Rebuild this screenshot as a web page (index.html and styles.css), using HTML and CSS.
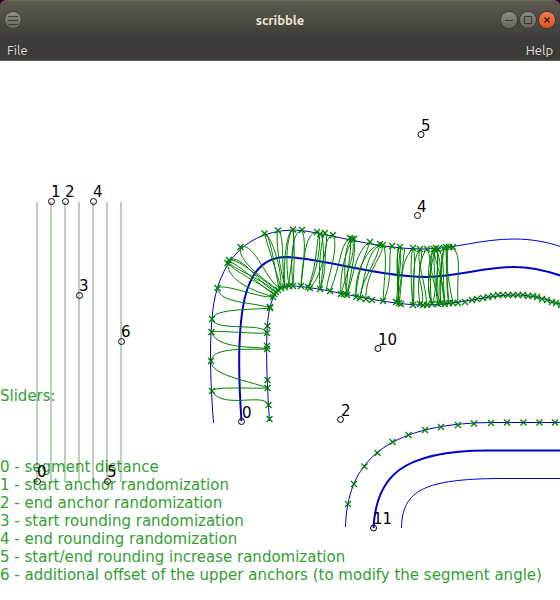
FILE: index.html
```html
<!DOCTYPE html>
<html lang="en">
<head>
    <meta charset="UTF-8">
    <meta name="viewport" content="width=device-width, initial-scale=1.0">
    <title>scribble</title>
    <link rel="stylesheet" href="styles.css">
</head>
<body>
    <header class="titlebar">
        <button type="button" class="round-button" aria-label="Window menu">
            <svg width="16" height="16" viewBox="0 0 16 16"><path d="M3 4.5h10M3 8.5h10M3 12.5h10"/></svg>
        </button>
        <h1>scribble</h1>
        <div class="window-buttons">
            <button type="button" class="round-button" aria-label="Minimize">
                <svg width="16" height="16" viewBox="0 0 16 16"><path d="M4 8.5h8"/></svg>
            </button>
            <button type="button" class="round-button" aria-label="Maximize">
                <svg width="16" height="16" viewBox="0 0 16 16"><path d="M4.5 4.5h7v7h-7z"/></svg>
            </button>
            <button type="button" class="round-button close" aria-label="Close">
                <svg width="16" height="16" viewBox="0 0 16 16"><path d="M5.5 5.5l5 5M10.5 5.5l-5 5"/></svg>
            </button>
        </div>
    </header>
    <nav class="menubar">
        <button type="button">File</button>
        <button type="button">Help</button>
    </nav>
    <main class="canvas">
        <svg class="scene" aria-hidden="true">
            <defs>
                <marker id="cross" markerUnits="userSpaceOnUse" markerWidth="8" markerHeight="8" refX="4" refY="4">
                    <path class="cross" d="M1 1L7 7M7 1L1 7"/>
                </marker>
            </defs>
            <g transform="translate(0 -61)">
                <!-- upper spline and its two offsets -->
                <path class="offset" d="M213.5 423C211 390 209 350 212 319C215 274 236 232 292 230C320 230 370 249 424 249C455 249 480 239 514 239C532 239 547 242 562 247"/>
                <path class="spline" d="M241.5 421C239 385 238 350 241 322C245 280 258 257 287 257C320 258 380 277 427 277C460 276 485 267 514 267C532 267 547 271 562 276"/>
                <path class="offset" d="M269.5 421C267 385 266 355 267 333C268 310 271 286 291 286C320 286 380 305 424 305C460 305 485 295 514 295C532 295 547 299 562 305"/>

                <!-- lower spline and its two offsets -->
                <path class="offset" d="M345.5 527C347 465 382 424 490 422.5H562"/>
                <path class="spline" d="M373.5 528C376 478 400 450 490 450.5H562"/>
                <path class="offset" d="M401.5 528C402 490 425 479 500 478.5H562"/>

                <!-- scribble, left side -->
                <path class="scribble" d="M268.5 405C265 392 222 410 212 391C212 386 255 389 267.5 388C255 382 210 376 211 361C212 346 252 350 267 349C258 346 217 350 211.5 332C216 330 250 334 267 333C265 322 214 332 212 319C214 308 255 310 270 308"/>
                <path class="scribble" d="M270 308C255 302 219 304 217.5 288C225 283 258 298 273 297C262 293 228 284 227.5 263C231 256 262 288 274 294C258 281 225 268 228.5 260C242 253 260 286 276 292C262 278 224 266 229 260C240 258 264 283 278 290C262 278 237 260 240.5 247C255 241 268 286 281 288"/>

                <!-- scribble, top of the bend -->
                <path class="scribble" d="M281 288C277 274 266 240 264.5 233.5C270 232 276 274 279 289M264.5 233.5C272 236 282 270 281 288M285 287C280 268 275 240 278 230.5C285 234 281 270 285 287C283 267 286 231 293 229.5C296 248 289 270 289 286C284 255 289 231 293 229.5C295 250 294 268 293 286C290 258 292 232 302 230C308 246 301 270 301 286M301 286C304 264 304 233 317 232C324 234 316 278 308 287C318 265 316 236 320 234C326 238 323 276 320 289C318 264 322 235 325 233C330 238 322 276 310 288M320 289C330 264 320 239 333 235C339 248 329 272 326 291"/>
                <path class="scribble" d="M330 291C341 265 340 244 350 238C353 250 345 274 347 295C342 270 346 240 352 239C357 250 347 272 341 294C339 270 349 242 354 239C357 248 350 278 347 295C354 274 356 250 370 242C364 258 356 278 356 297C354 272 368 247 380 244C377 262 362 278 360 298C365 274 368 248 382 245C386 252 365 272 366 299M383 245C388 254 384 280 383 301C394 282 387 252 392 246"/>

                <!-- scribble, right side -->
                <path class="scribble" d="M396 302C400 286 394 252 400 247C403 262 396 284 399 303C397 280 396 248 400 247M399 303C403 280 399 264 413 248C417 258 412 284 413 305C410 280 411 250 413 248M413 305C416 286 410 262 420 249C425 258 415 274 420 304C424 304 423 292 420 281C418 272 421 255 427 249C434 260 428 286 432 304C426 288 428 256 434 249C434 264 423 284 432 304C440 286 430 262 436 248C444 266 438 284 441 303C433 286 426 254 436 248C441 262 433 285 438 304C438 286 437 262 438 249C446 258 442 284 445 304C439 278 441 248 446 247C450 252 444 284 449 303C447 280 444 250 449 247C464 250 456 274 458 303"/>
                <path class="scribble" d="M399 303C398 282 398 260 401 247M397 302C402 280 403 257 405 248M427 305C424 274 416 262 420 249M441 303C438 280 443 260 444 248M445 304C444 280 434 260 434 249M453 303C448 280 446 260 446 247"/>

                <!-- anchors -->
                <path class="anchors" d="M212 391L211 361L211.5 332L212 319L217.5 288L227.5 263L229 260L240.5 247L264.5 233.5L278 230.5L293 229.5L302 230L317 232L320 234L325 233L333 235L350 238L352 239L354 239L370 242L380 244L383 245L392 246L400 247L413 248L420 249L427 249L434 249L436 248L438 249L444 248L446 247L449 247L453 247"/>
                <path class="anchors" d="M269.5 419L268.5 405L267.5 388L267.5 380L267 349L267 346L267 333L267.5 326L270 308L270 307L273 297L274 294L276 292L278 290L281 288L285 287L289 286L293 286L301 286L308 287L310 288L320 289L330 291L341 294L344 294L347 295L356 297L360 298L366 299L372 300L383 301L396 302L399 303L401 304L413 305L420 304L423 305L427 305L432 304L438 304L441 303L445 304L449 303L453 303"/>
                <path class="anchors" d="M458 303L465 302L472 300L477 299L483 298L488 297L493 296L498 295L503 295L508 295L513 295L518 295L523 295L528 296L533 296L537 297L542 299L547 300L552 302L556 303L561 305"/>
                <path class="anchors" d="M348 504L354 484L364.5 466.5L377.5 453L392.5 442L408.5 435L425 430L441 427L458 425L474 423.5L491 423L507 422.5L523.5 422.5L539.5 422.5L555 422.5"/>

                <!-- control points -->
                <g class="points">
                    <circle cx="241.5" cy="421.5" r="3"/>
                    <circle cx="340.5" cy="419.5" r="3"/>
                    <circle cx="417.5" cy="215.5" r="3"/>
                    <circle cx="421" cy="134.5" r="3"/>
                    <circle cx="378" cy="348.5" r="3"/>
                    <circle cx="373.5" cy="528" r="3"/>
                </g>
                <g class="numbers">
                    <text x="242" y="418">0</text>
                    <text x="341" y="416">2</text>
                    <text x="417" y="212">4</text>
                    <text x="421" y="131">5</text>
                    <text x="378" y="345">10</text>
                    <text x="373" y="524">11</text>
                </g>
            </g>
        </svg>

        <div class="notes">
            <h2>Sliders:</h2>
            <p>0 - segment distance</p>
            <p>1 - start anchor randomization</p>
            <p>2 - end anchor randomization</p>
            <p>3 - start rounding randomization</p>
            <p>4 - end rounding randomization</p>
            <p>5 - start/end rounding increase randomization</p>
            <p>6 - additional offset of the upper anchors (to modify the segment angle)</p>
        </div>

        <div class="sliders">
            <div class="slider" style="--value: 0">
                <input type="range" id="s0" min="0" max="280" value="0">
                <label for="s0">0</label>
            </div>
            <div class="slider" style="--value: 280">
                <input type="range" id="s1" min="0" max="280" value="280">
                <label for="s1">1</label>
            </div>
            <div class="slider" style="--value: 280">
                <input type="range" id="s2" min="0" max="280" value="280">
                <label for="s2">2</label>
            </div>
            <div class="slider" style="--value: 186">
                <input type="range" id="s3" min="0" max="280" value="186">
                <label for="s3">3</label>
            </div>
            <div class="slider" style="--value: 280">
                <input type="range" id="s4" min="0" max="280" value="280">
                <label for="s4">4</label>
            </div>
            <div class="slider" style="--value: 0">
                <input type="range" id="s5" min="0" max="280" value="0">
                <label for="s5">5</label>
            </div>
            <div class="slider" style="--value: 140">
                <input type="range" id="s6" min="0" max="280" value="140">
                <label for="s6">6</label>
            </div>
        </div>
    </main>
    <script>
        // keep each number next to its handle
        document.querySelectorAll('.slider input').forEach(input => {
            input.addEventListener('input', () => {
                input.parentElement.style.setProperty('--value', input.value);
            });
        });
    </script>
</body>
</html>
```
FILE: styles.css
```css
body {
    margin: 0;
    height: 100vh;
    display: flex;
    flex-direction: column;
    font-family: "DejaVu Sans", sans-serif;
    font-size: 15px;
    line-height: 18px;
    background: #2c001e;
    overflow: hidden;
}

.titlebar {
    display: grid;
    grid-template-columns: 1fr auto 1fr;
    align-items: center;
    height: 39px;
    padding: 0 5px;
    box-sizing: border-box;
    background: linear-gradient(#5d594f, #3e3d39);
    border-top: 1px solid #69665c;
    border-radius: 6px 6px 0 0;
}

.titlebar h1 {
    margin: 0;
    font-family: Ubuntu, "Noto Sans", sans-serif;
    font-size: 13px;
    font-weight: bold;
    color: #e8e4d8;
}

.window-buttons {
    display: flex;
    justify-content: flex-end;
    gap: 3px;
}

.round-button {
    width: 16px;
    height: 16px;
    padding: 0;
    border: none;
    border-radius: 50%;
    background: linear-gradient(#8d8b83, #66645d);
    box-shadow: 0 0 0 1px #3c3b37;
}

.round-button svg {
    display: block;
    fill: none;
    stroke: #3c3b37;
}

.round-button.close {
    background: linear-gradient(#f67c52, #e0501f);
}

.round-button.close svg {
    stroke: #4a2010;
    stroke-width: 1.5;
}

.menubar {
    display: flex;
    justify-content: space-between;
    height: 22px;
    padding: 1px 7px 0;
    box-sizing: border-box;
    background: #3c3b37;
    border-bottom: 1px solid #5c5b56;
}

.menubar button {
    padding: 0;
    border: none;
    background: none;
    font-family: Ubuntu, "Noto Sans", sans-serif;
    font-size: 13px;
    color: #dfdbd2;
}

.canvas {
    position: relative;
    flex: 1;
    display: flex;
    flex-direction: column;
    justify-content: flex-end;
    background: #fff;
    overflow: hidden;
}

.scene {
    position: absolute;
    top: 0;
    left: 0;
    width: 100%;
    height: 100%;
}

.offset,
.spline,
.scribble {
    fill: none;
    stroke: #0000c8;
    stroke-width: 1;
}

.spline {
    stroke-width: 2;
}

.scribble,
.cross {
    stroke: #008000;
}

.cross {
    stroke-width: 1.3;
}

.anchors {
    fill: none;
    stroke: none;
    marker: url(#cross);
}

.points {
    fill: none;
    stroke: #000;
}

.numbers {
    fill: #000;
}

.notes {
    padding-bottom: 16px;
    color: #32a032;
    white-space: nowrap;
}

.notes h2 {
    margin: 0 0 53px;
    font-size: 15px;
    font-weight: normal;
}

.notes p {
    margin: 0;
}

/* vertical sliders lie over the drawing */
.sliders {
    position: absolute;
    top: 137px;
    left: 30px;
    display: flex;
}

.slider {
    position: relative;
    width: 14px;
    height: 287px;
}

.slider input {
    display: block;
    width: 14px;
    height: 287px;
    margin: 0;
    appearance: none;
    writing-mode: vertical-lr;
    direction: rtl;
    background: linear-gradient(rgba(0, 90, 0, 0.28), rgba(0, 90, 0, 0.28)) center / 2px 280px no-repeat;
}

.slider input::-webkit-slider-thumb {
    appearance: none;
    width: 7px;
    height: 7px;
    box-sizing: border-box;
    border: 1px solid #000;
    border-radius: 50%;
}

.slider label {
    position: absolute;
    left: 7px;
    bottom: calc(var(--value) * 1px + 4px);
}
```
